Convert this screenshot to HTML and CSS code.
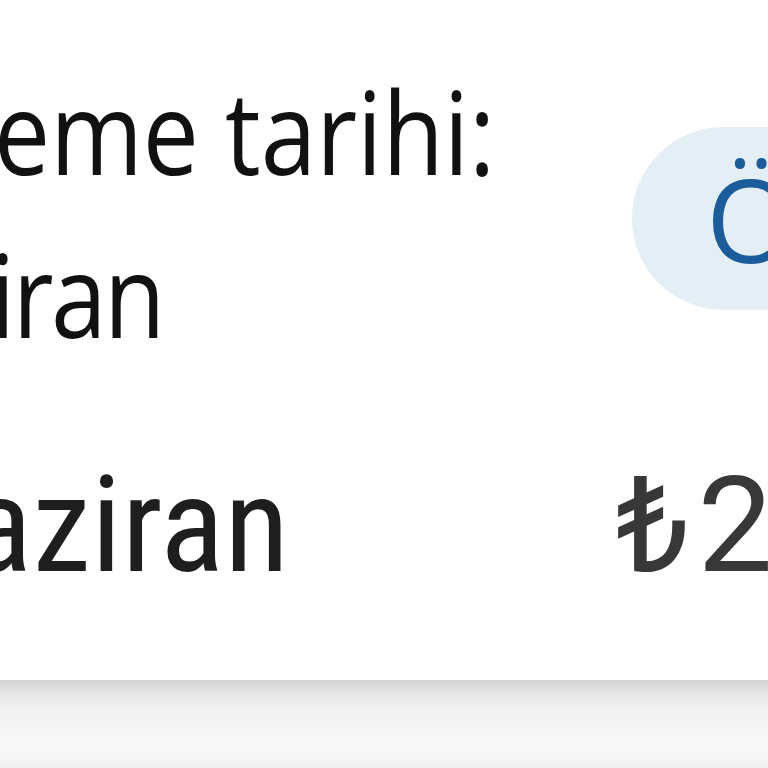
FILE: index.html
```html
<!DOCTYPE html>
<html lang="tr">
<head>
<meta charset="utf-8">
<link rel="stylesheet" href="styles.css">
</head>
<body>
<div class="card">
  <div class="row-top">
    <div class="dates">
      <div class="label"><span class="txt txt-title">eme tarihi:</span></div>
      <div class="label"><span class="txt txt-date">iran</span></div>
    </div>
    <div class="pill">Ö</div>
  </div>
  <div class="row-amount">
    <div class="month">aziran</div>
    <div class="amount">₺2</div>
  </div>
</div>
<div class="footer"></div>
</body>
</html>
```
FILE: styles.css
```css
html, body {
  margin: 0;
  padding: 0;
  width: 768px;
  height: 768px;
  overflow: hidden;
  background: #f8f8f8;
}
.card {
  height: 680px;
  background: #ffffff;
  overflow: hidden;
  display: flex;
  flex-direction: column;
}
.row-top {
  display: flex;
  align-items: flex-start;
  padding-top: 49px;
  white-space: nowrap;
}
.dates {
  flex: 0 0 632px;
}
.label {
  font-family: "Open Sans", "Noto Sans", sans-serif;
  font-size: 115px;
  line-height: 163px;
  color: #111111;
}
.txt {
  display: inline-block;
  transform: scaleX(0.87);
  transform-origin: 0 0;
}
.txt-title {
  margin-left: -6px;
}
.txt-date {
  margin-left: -10px;
  letter-spacing: -3px;
}
.pill {
  flex: 0 0 auto;
  margin-top: 78px;
  height: 183px;
  padding: 0 80px 0 74px;
  border-radius: 92px;
  background: #e4eef5;
  font-family: "Open Sans", "Noto Sans", sans-serif;
  font-size: 115px;
  line-height: 183px;
  color: #1b5c9c;
}
.row-amount {
  display: flex;
  align-items: baseline;
  white-space: nowrap;
  margin-top: 84px;
  font-family: Roboto, "Noto Sans", sans-serif;
  font-size: 134px;
  line-height: 134px;
}
.month {
  flex: 0 0 648px;
  margin-left: -32px;
  font-stretch: 85%;
  color: #1e1e1e;
}
.amount {
  color: #383838;
  letter-spacing: 7px;
}
.footer {
  height: 88px;
  background: linear-gradient(#d3d3d3 0px, #e6e6e6 13px, #f0f0f0 27px, #f6f6f6 47px, #f9f9f9 62px, #f6f6f6 78px, #efefef 88px);
}
```
